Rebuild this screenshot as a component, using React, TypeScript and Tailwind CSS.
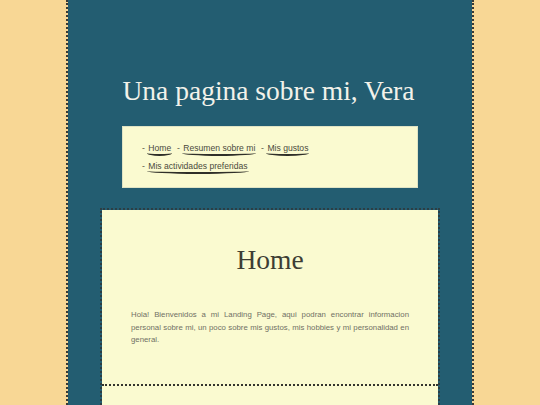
import React from "react";

const linkCls =
  "text-[#4a4a3c] border-b-[2.5px] border-[#2f2f28] rounded-[50%/3px] pb-[1px] px-[1px]";

export default function App() {
  return (
    <div className="min-h-[405px] h-[405px] overflow-hidden bg-[#f8d795]">
      <div
        className="mx-auto w-[408px] h-[405px] bg-[#235d71] bg-clip-padding border-x-2 border-dotted border-[#3a3a36] flex flex-col items-center"
        style={{ fontFamily: '"Liberation Sans", Arial, sans-serif' }}
      >
        <h1
          className="mt-[75px] mr-[3px] text-[27.5px] leading-[32px] text-[#f2f2ea]"
          style={{ fontFamily: '"Liberation Serif", "Times New Roman", serif' }}
        >
          Una pagina sobre mi, Vera
        </h1>
        <nav className="mt-[19px] w-[296px] bg-[#fafad0] border border-[#dfe3c4] pt-[12px] pb-[12px] pl-[19px] pr-[10px] text-[8.6px] leading-[18px] text-[#55554a]">
          <div>
            <span>- </span>
            <span className={linkCls}>Home</span>
            <span> &nbsp;- </span>
            <span className={linkCls}>Resumen sobre mi</span>
            <span> &nbsp;- </span>
            <span className={linkCls}>Mis gustos</span>
          </div>
          <div>
            <span>- </span>
            <span className={linkCls}>Mis actividades preferidas</span>
          </div>
        </nav>
        <div className="mt-[20px] w-[340px] flex-1 flex flex-col bg-[#fafad0] bg-clip-padding border-x-2 border-t-2 border-dotted border-[#2c3e44]">
          <section className="pt-[34px] pb-[37px] px-[29px]">
            <h2
              className="text-center text-[27.5px] leading-[32px] text-[#3d3d34]"
              style={{ fontFamily: '"Liberation Serif", "Times New Roman", serif' }}
            >
              Home
            </h2>
            <p className="mt-[33px] text-justify text-[7.8px] leading-[12.5px] text-[#707064]">
              Hola! Bienvenidos a mi Landing Page, aqui podran encontrar informacion personal sobre mi, un poco sobre mis gustos, mis hobbies y mi personalidad en general.
            </p>
          </section>
          <div className="border-t-2 border-dotted border-[#34342e]" />
          <section className="flex-1" />
        </div>
      </div>
    </div>
  );
}
